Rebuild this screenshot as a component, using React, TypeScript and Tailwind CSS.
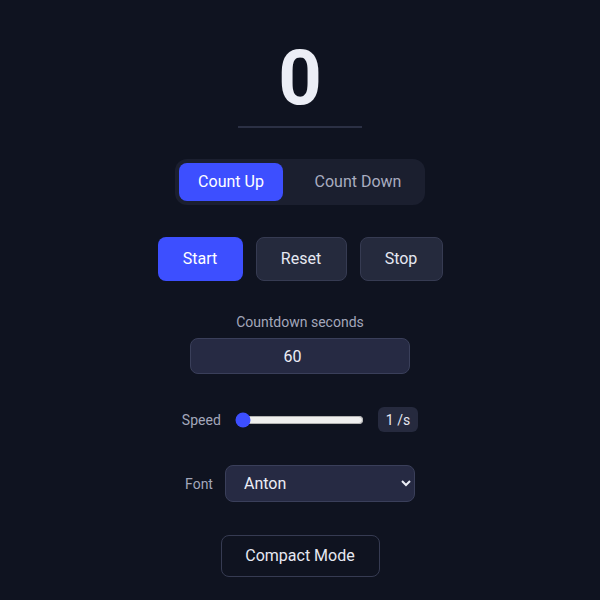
import { useState } from 'react';

export default function App() {
  const [mode, setMode] = useState<'up' | 'down'>('up');
  const [seconds, setSeconds] = useState('60');
  const [speed, setSpeed] = useState(1);
  const [font, setFont] = useState('Anton');

  return (
    <div
      className="min-h-[600px] w-full bg-[#0f1320] flex flex-col items-center text-[#e6e8f2]"
      style={{ fontFamily: 'Roboto, "Noto Sans", sans-serif' }}
    >
      {/* Counter display */}
      <div className="mt-[40px] text-[76px] leading-none font-bold text-[#eceef6]">0</div>
      <div className="mt-[10px] h-[2px] w-[124px] bg-[#2b3044]" />

      {/* Mode toggle */}
      <div className="mt-[31px] flex gap-[12px] p-[4px] bg-[#1b1f2f] rounded-xl">
        <button
          onClick={() => setMode('up')}
          className={`h-[38px] w-[104px] rounded-lg text-base ${
            mode === 'up' ? 'bg-[#3d4fff] text-white' : 'text-[#a9adc0]'
          }`}
        >
          Count Up
        </button>
        <button
          onClick={() => setMode('down')}
          className={`h-[38px] w-[126px] rounded-lg text-base ${
            mode === 'down' ? 'bg-[#3d4fff] text-white' : 'text-[#a9adc0]'
          }`}
        >
          Count Down
        </button>
      </div>

      {/* Controls */}
      <div className="mt-[32px] flex gap-[13px]">
        <button className="h-[44px] w-[85px] rounded-lg bg-[#3d4fff] text-white text-base">Start</button>
        <button className="h-[44px] w-[91px] rounded-lg bg-[#252a3d] border border-[#363b52] text-[#e6e8f2] text-base">
          Reset
        </button>
        <button className="h-[44px] w-[83px] rounded-lg bg-[#252a3d] border border-[#363b52] text-[#e6e8f2] text-base">
          Stop
        </button>
      </div>

      {/* Countdown seconds */}
      <label className="mt-[31px] text-sm leading-5 text-[#a3a7bb]">Countdown seconds</label>
      <input
        type="number"
        value={seconds}
        onChange={(e) => setSeconds(e.target.value)}
        className="mt-[6px] h-[36px] w-[220px] rounded-lg bg-[#262a43] border border-[#3a3f5a] px-[8px] text-center text-base text-[#eceef6] outline-none"
      />

      {/* Speed */}
      <div className="mt-[33px] flex items-center h-[25px]">
        <span className="text-sm text-[#a3a7bb] mr-[14px]">Speed</span>
        <input
          type="range"
          min={1}
          max={10}
          value={speed}
          onChange={(e) => setSpeed(Number(e.target.value))}
          className="w-[129px] accent-[#3d4fff]"
        />
        <span className="ml-[14px] h-[25px] px-[8px] flex items-center rounded-md bg-[#262a3e] text-sm text-[#e6e8f2]">
          {speed} /s
        </span>
      </div>

      {/* Font */}
      <div className="mt-[33px] flex items-center">
        <span className="text-sm text-[#a3a7bb] mr-[12px]">Font</span>
        <select
          value={font}
          onChange={(e) => setFont(e.target.value)}
          className="h-[37px] w-[190px] rounded-lg bg-[#262a43] border border-[#3a3f5a] pl-[14px] pr-[8px] text-base text-[#eceef6] outline-none [color-scheme:dark]"
        >
          <option>Anton</option>
          <option>Inter</option>
          <option>Roboto</option>
        </select>
      </div>

      {/* Compact */}
      <button className="mt-[33px] h-[42px] w-[159px] rounded-lg border border-[#363b52] text-base text-[#e6e8f2]">
        Compact Mode
      </button>
    </div>
  );
}
